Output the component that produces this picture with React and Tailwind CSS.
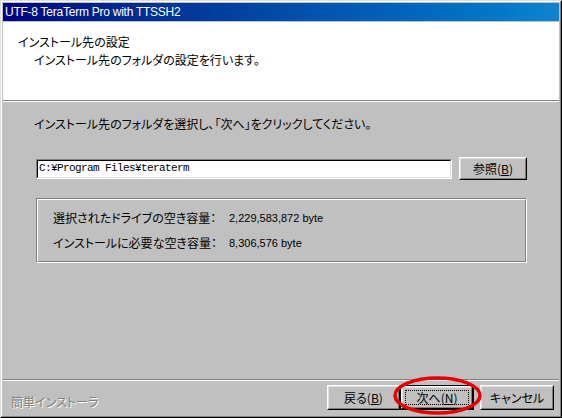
import React from "react";

const jp = "font-['Noto_Sans_CJK_JP',sans-serif] [font-feature-settings:'palt']";

function Btn({ children, w = "w-[73px]", h = "h-[23px]", isDefault = false }) {
  if (isDefault) {
    return (
      <div className={`${w} ${h} border border-black`}>
        <div className="w-full h-full border-t border-l border-white border-r border-b border-r-black border-b-black">
          <div className="w-full h-full border-t border-l border-[#dfdfdf] border-r border-b border-r-[#808080] border-b-[#808080] bg-[#c0c0c0] p-[2px]">
            <div className={`w-full h-full border border-dotted border-black flex items-center justify-center text-[12px] text-black leading-none ${jp}`}>
              {children}
            </div>
          </div>
        </div>
      </div>
    );
  }
  return (
    <div className={`${w} ${h} border-t border-l border-white border-r border-b border-r-black border-b-black`}>
      <div className={`w-full h-full border-t border-l border-[#dfdfdf] border-r border-b border-r-[#808080] border-b-[#808080] bg-[#c0c0c0] flex items-center justify-center text-[12px] text-black leading-none ${jp}`}>
        {children}
      </div>
    </div>
  );
}

export default function App() {
  return (
    <div className="relative w-[562px] h-[418px] border-t border-l border-[#dfdfdf] border-r border-b border-r-black border-b-black bg-[#c0c0c0]">
      <div className="w-full h-full border-t border-l border-white border-r border-b border-r-[#808080] border-b-[#808080] p-[1px] flex flex-col">
        {/* title bar */}
        <div className="h-[18px] bg-gradient-to-r from-[#000080] to-[#1084d0] flex items-center pl-[2px]">
          <span className="text-white text-[12px] leading-none font-['Liberation_Sans',sans-serif] tracking-[-0.25px]">
            UTF-8 TeraTerm Pro with TTSSH2
          </span>
        </div>
        {/* header */}
        <div className="mt-[1px] h-[78px] bg-white pt-[12px] pl-[15px]">
          <div className={`h-[16px] leading-[16px] text-[12px] text-black ${jp}`}>インストール先の設定</div>
          <div className={`mt-[2px] pl-[16px] h-[16px] leading-[16px] text-[12px] text-black ${jp}`}>
            インストール先のフォルダの設定を行います。
          </div>
        </div>
        <div className="h-[2px] border-t border-[#808080] border-b border-b-white" />
        {/* body */}
        <div className="flex-1 flex flex-col pt-[14px]">
          <div className={`pl-[31px] h-[16px] leading-[16px] text-[12px] text-black ${jp}`}>
            インストール先のフォルダを選択し、「次へ」をクリックしてください。
          </div>
          <div className="mt-[25px] flex items-center pl-[33px] gap-[7px]">
            <div className="w-[416px] h-[20px] border-t border-l border-[#808080] border-r border-b border-r-white border-b-white">
              <div className="w-full h-full border-t border-l border-black border-r border-b border-r-[#dfdfdf] border-b-[#dfdfdf] bg-white flex items-center pl-[1px]">
                <span className="text-[11px] leading-none tracking-[-0.6px] text-black font-['Liberation_Mono',monospace]">C:¥Program Files¥teraterm</span>
              </div>
            </div>
            <Btn w="w-[68px]" h="h-[23px]">
              参照(<span className="underline">B</span>)
            </Btn>
          </div>
          <div className="mt-[18px] ml-[33px] w-[491px] h-[65px] border-t border-l border-[#808080] border-r border-b border-r-white border-b-white">
            <div className="w-full h-full border-t border-l border-white border-r border-b border-r-[#808080] border-b-[#808080] pl-[15px] pt-[10px]">
              <div className="flex h-[16px] items-center">
                <div className={`w-[176px] text-[12px] leading-none text-black ${jp}`}>選択されたドライブの空き容量：</div>
                <div className="text-[11px] leading-none text-black font-['Liberation_Sans',sans-serif]">2,229,583,872 byte</div>
              </div>
              <div className="mt-[9px] flex h-[16px] items-center">
                <div className={`w-[176px] text-[12px] leading-none text-black ${jp}`}>インストールに必要な空き容量：</div>
                <div className="text-[11px] leading-none text-black font-['Liberation_Sans',sans-serif]">8,306,576 byte</div>
              </div>
            </div>
          </div>
        </div>
        <div className="h-[2px] border-t border-[#808080] border-b border-b-white" />
        {/* footer */}
        <div className="h-[34px] flex items-start pt-[4px] pr-[5px]">
          <div className={`self-center mt-[4px] pl-[8px] text-[12px] leading-none text-[#808080] [text-shadow:1px_1px_0_#fff] ${jp}`}>
            簡単インストーラ
          </div>
          <div className="ml-auto flex">
            <Btn w="w-[73px]" h="h-[25px]">
              戻る(<span className="underline">B</span>)
            </Btn>
            <Btn w="w-[74px]" h="h-[25px]" isDefault>
              次へ(<span className="underline">N</span>)
            </Btn>
            <div className="w-[6px]" />
            <Btn w="w-[74px]" h="h-[25px]">キャンセル</Btn>
          </div>
        </div>
      </div>
      <svg className="absolute left-[392px] top-[375px] pointer-events-none" width="90" height="40" viewBox="0 0 90 40">
        <ellipse cx="44.5" cy="19.5" rx="42.5" ry="17.5" fill="none" stroke="#e80000" strokeWidth="3.5" />
      </svg>
    </div>
  );
}
